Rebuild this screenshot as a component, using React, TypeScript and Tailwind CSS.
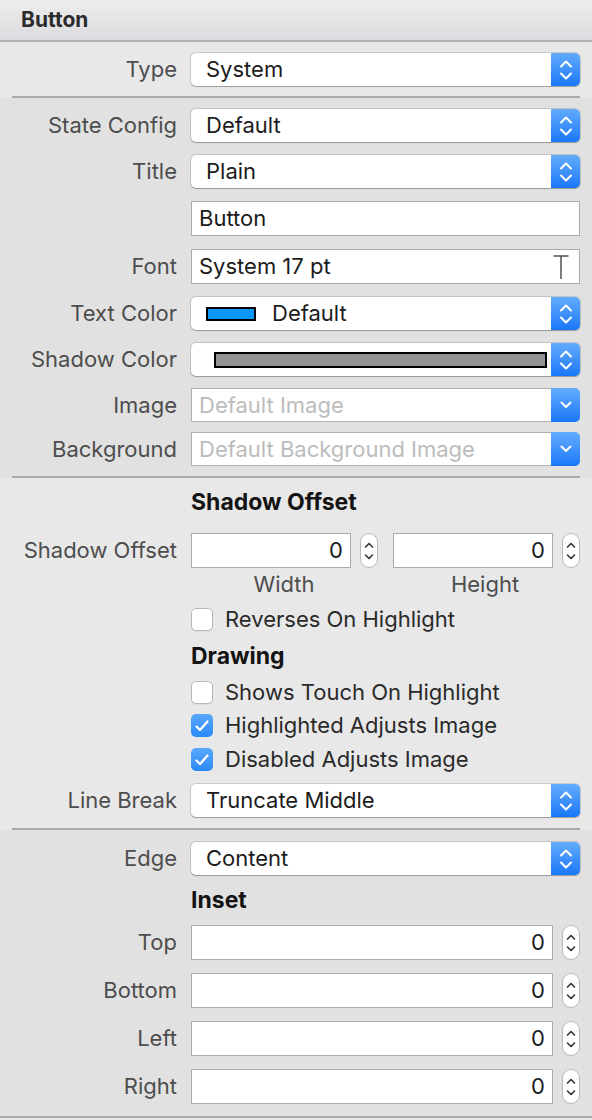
import type { ReactNode } from 'react'

const sans = "font-['Inter','Liberation_Sans',sans-serif]"

function UpDownChevrons() {
  return (
    <svg width="14" height="22" viewBox="0 0 14 22" fill="none" stroke="white" strokeWidth="2" strokeLinecap="round" strokeLinejoin="round">
      <polyline points="2,7.5 7,2.5 12,7.5" />
      <polyline points="2,14.5 7,19.5 12,14.5" />
    </svg>
  )
}

function DownChevron() {
  return (
    <svg width="12" height="8" viewBox="0 0 12 8" fill="none" stroke="white" strokeWidth="2" strokeLinecap="round" strokeLinejoin="round">
      <polyline points="1.5,1.5 6,6 10.5,1.5" />
    </svg>
  )
}

function Popup({ children }: { children: ReactNode }) {
  return (
    <div className="flex h-[33px] flex-1 rounded-[5px] bg-white shadow-[0_0_0_1px_rgba(0,0,0,0.13),0_1px_1px_rgba(0,0,0,0.22)]">
      <div className="flex min-w-0 flex-1 items-center pl-[15px] text-[22px] leading-[25px] text-[#1c1c1c]">{children}</div>
      <div className="flex w-[29px] items-center justify-center rounded-r-[5px] bg-gradient-to-b from-[#62acfd] to-[#1677f8]">
        <UpDownChevrons />
      </div>
    </div>
  )
}

function ComboBox({ placeholder }: { placeholder: string }) {
  return (
    <div className="flex h-[34px] flex-1">
      <div className="flex flex-1 items-center border border-r-0 border-[#b0b0b0] bg-white pl-[7px] text-[22px] leading-[25px] text-[#bcbcbc]">
        {placeholder}
      </div>
      <div className="flex w-[29px] items-center justify-center rounded-r-[5px] bg-gradient-to-b from-[#62acfd] to-[#1677f8]">
        <DownChevron />
      </div>
    </div>
  )
}

function Field({ children, right }: { children?: ReactNode; right?: boolean }) {
  return (
    <div
      className={`flex h-[35px] flex-1 items-center border border-[#ababab] bg-white text-[22px] leading-[25px] text-[#1c1c1c] ${
        right ? 'justify-end pr-[7px]' : 'pl-[7px]'
      }`}
    >
      {children}
    </div>
  )
}

function Stepper() {
  return (
    <div className="flex h-[35px] w-[18px] shrink-0 flex-col items-center justify-center gap-[6px] rounded-[9px] border border-[#b9b9b9] bg-white">
      <svg width="10" height="6" viewBox="0 0 10 6" fill="none" stroke="#333" strokeWidth="1.6" strokeLinecap="round" strokeLinejoin="round">
        <polyline points="1.5,5 5,1.5 8.5,5" />
      </svg>
      <svg width="10" height="6" viewBox="0 0 10 6" fill="none" stroke="#333" strokeWidth="1.6" strokeLinecap="round" strokeLinejoin="round">
        <polyline points="1.5,1 5,4.5 8.5,1" />
      </svg>
    </div>
  )
}

function NumberField() {
  return (
    <div className="flex flex-1 items-center gap-[9px]">
      <Field right>0</Field>
      <Stepper />
    </div>
  )
}

function Check({ label, checked, className = '' }: { label: string; checked?: boolean; className?: string }) {
  return (
    <div className={`ml-[191px] flex h-[23px] items-center gap-[12px] ${className}`}>
      {checked ? (
        <div className="flex h-[23px] w-[22px] items-center justify-center rounded-[5px] bg-gradient-to-b from-[#58a8fc] to-[#2a8af9]">
          <svg width="16" height="14" viewBox="0 0 16 14" fill="none" stroke="white" strokeWidth="2.3" strokeLinecap="round" strokeLinejoin="round">
            <polyline points="2.5,7.5 6,11 13.5,2.5" />
          </svg>
        </div>
      ) : (
        <div className="h-[23px] w-[22px] rounded-[5px] border border-[#b8b8b8] bg-white shadow-[0_1px_0_rgba(0,0,0,0.05)]" />
      )}
      <span className="text-[22px] leading-[25px] text-[#2a2a2a]">{label}</span>
    </div>
  )
}

function Row({ label, children, className = '' }: { label?: string; children: ReactNode; className?: string }) {
  return (
    <div className={`flex items-center ${className}`}>
      <div className="w-[177px] shrink-0 text-right text-[22px] leading-[25px] text-[#4d4d4d]">{label}</div>
      <div className="ml-[14px] mr-[12px] flex flex-1 items-center">{children}</div>
    </div>
  )
}

function Heading({ children, className = '' }: { children: ReactNode; className?: string }) {
  return <div className={`ml-[191px] text-[23px] font-bold leading-[25px] text-[#141414] ${className}`}>{children}</div>
}

function Separator({ className = '' }: { className?: string }) {
  return <div className={`mx-[12px] h-[2px] bg-[#a9a9a9] ${className}`} />
}

export default function App() {
  return (
    <div className={`h-[1120px] w-[592px] overflow-hidden bg-[#e8e8e8] ${sans}`}>
      <div className="flex h-[42px] items-center border-b-2 border-[#b3b3b3] bg-gradient-to-b from-[#ededed] to-[#dcdce0] pl-[21px] text-[21px] font-bold text-[#2b2b2b]">
        Button
      </div>

      <section className="bg-[#e8e8e8] pt-[11px]">
        <Row label="Type">
          <Popup>System</Popup>
        </Row>
        <Separator className="mt-[10px]" />
      </section>

      <section className="bg-[#e1e1e1] pt-[11px]">
        <Row label="State Config">
          <Popup>Default</Popup>
        </Row>
        <Row label="Title" className="mt-[13px]">
          <Popup>Plain</Popup>
        </Row>
        <Row className="mt-[13px]">
          <Field>Button</Field>
        </Row>
        <Row label="Font" className="mt-[13px]">
          <Field>
            <span className="flex-1">System 17 pt</span>
            <svg width="18" height="26" viewBox="0 0 18 26" className="mr-[9px]" fill="none" stroke="#474747" strokeWidth="1.4">
              <line x1="1.5" y1="2" x2="16.5" y2="2" />
              <line x1="9" y1="2" x2="9" y2="25" />
            </svg>
          </Field>
        </Row>
        <Row label="Text Color" className="mt-[13px]">
          <Popup>
            <span className="h-[14px] w-[50px] border-2 border-black bg-[#0a97f8]" />
            <span className="ml-[16px]">Default</span>
          </Popup>
        </Row>
        <Row label="Shadow Color" className="mt-[13px]">
          <Popup>
            <span className="ml-[8px] mr-[4px] h-[16px] flex-1 border-2 border-black bg-[#939393]" />
          </Popup>
        </Row>
        <Row label="Image" className="mt-[12px]">
          <ComboBox placeholder="Default Image" />
        </Row>
        <Row label="Background" className="mt-[10px]">
          <ComboBox placeholder="Default Background Image" />
        </Row>
        <Separator className="mt-[10px]" />
      </section>

      <section className="bg-[#e8e8e8] pt-[12px]">
        <Heading>Shadow Offset</Heading>
        <Row label="Shadow Offset" className="mt-[18px]">
          <div className="flex flex-1 gap-[15px]">
            <NumberField />
            <NumberField />
          </div>
        </Row>
        <div className="ml-[191px] mr-[14px] mt-[4px] flex gap-[15px] text-[22px] leading-[25px] text-[#4d4d4d]">
          <div className="flex flex-1 justify-center">Width</div>
          <div className="flex flex-1 justify-center">Height</div>
        </div>
        <Check label="Reverses On Highlight" className="mt-[11px]" />
        <Heading className="mt-[13px]">Drawing</Heading>
        <Check label="Shows Touch On Highlight" className="mt-[12px]" />
        <Check label="Highlighted Adjusts Image" checked className="mt-[10px]" />
        <Check label="Disabled Adjusts Image" checked className="mt-[11px]" />
        <Row label="Line Break" className="mt-[13px]">
          <Popup>Truncate Middle</Popup>
        </Row>
        <Separator className="mt-[11px]" />
      </section>

      <section className="bg-[#e1e1e1] pt-[12px]">
        <Row label="Edge">
          <Popup>Content</Popup>
        </Row>
        <Heading className="mt-[13px]">Inset</Heading>
        <Row label="Top" className="mt-[12px]">
          <NumberField />
        </Row>
        <Row label="Bottom" className="mt-[13px]">
          <NumberField />
        </Row>
        <Row label="Left" className="mt-[13px]">
          <NumberField />
        </Row>
        <Row label="Right" className="mt-[13px]">
          <NumberField />
        </Row>
        <div className="mt-[12px] h-[2px] bg-[#a9a9a9]" />
      </section>
    </div>
  )
}
